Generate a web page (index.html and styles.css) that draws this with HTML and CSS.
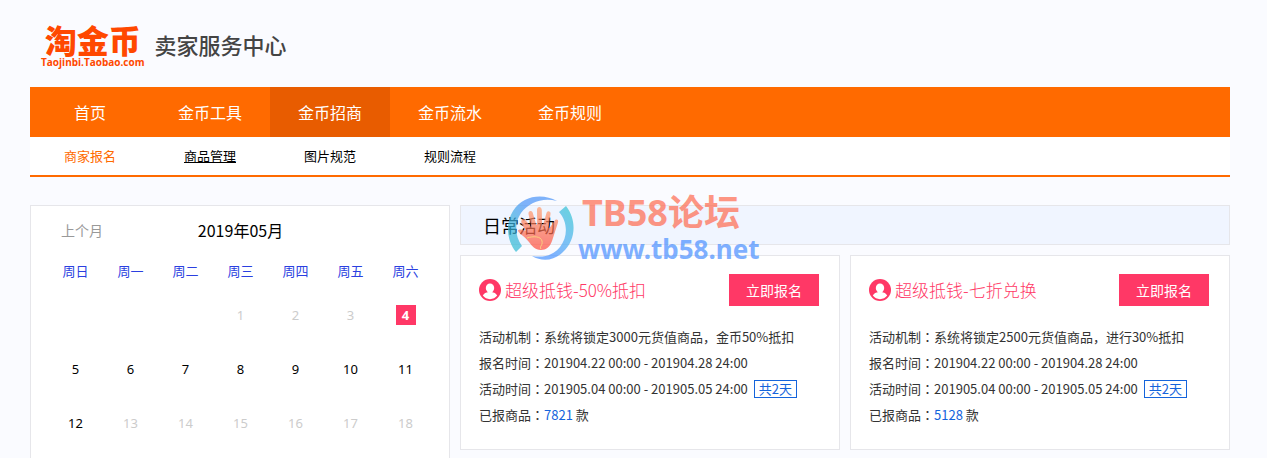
FILE: index.html
```html
<!DOCTYPE html>
<html lang="zh-CN">
<head>
<meta charset="utf-8">
<title>淘金币 卖家服务中心</title>
<link rel="stylesheet" href="styles.css">
</head>
<body>
<div class="page">
  <header class="header">
    <a class="logo" href="#">
      <span class="logo-name">淘金币</span>
      <span class="logo-domain">Taojinbi.Taobao.com</span>
    </a>
    <span class="header-title">卖家服务中心</span>
  </header>

  <nav class="nav">
    <a class="nav-item" href="#">首页</a>
    <a class="nav-item" href="#">金币工具</a>
    <a class="nav-item nav-active" href="#">金币招商</a>
    <a class="nav-item" href="#">金币流水</a>
    <a class="nav-item" href="#">金币规则</a>
  </nav>
  <nav class="subnav">
    <a class="subnav-item subnav-active" href="#">商家报名</a>
    <a class="subnav-item subnav-hover" href="#">商品管理</a>
    <a class="subnav-item" href="#">图片规范</a>
    <a class="subnav-item" href="#">规则流程</a>
  </nav>

  <main class="main">
    <section class="calendar">
      <div class="calendar-head">
        <a class="calendar-prev" href="#">上个月</a>
        <h2 class="calendar-title">2019年05月</h2>
      </div>
      <table class="calendar-table">
        <thead>
          <tr><th>周日</th><th>周一</th><th>周二</th><th>周三</th><th>周四</th><th>周五</th><th>周六</th></tr>
        </thead>
        <tbody>
          <tr><td></td><td></td><td></td><td class="off">1</td><td class="off">2</td><td class="off">3</td><td><span class="today">4</span></td></tr>
          <tr><td>5</td><td>6</td><td>7</td><td>8</td><td>9</td><td>10</td><td>11</td></tr>
          <tr><td>12</td><td class="off">13</td><td class="off">14</td><td class="off">15</td><td class="off">16</td><td class="off">17</td><td class="off">18</td></tr>
        </tbody>
      </table>
    </section>

    <section class="activities">
      <h2 class="activities-title">日常活动</h2>
      <div class="cards">
        <article class="card">
          <div class="card-head">
            <svg class="card-icon" viewBox="0 0 22 22" aria-hidden="true"><circle cx="11" cy="11" r="11" fill="#ff3866"/><ellipse cx="11" cy="9" rx="4.200" ry="4.600" fill="#fff"/><path d="M3.800 16.600c1-2.200 3.200-3.300 5.700-3.600h3c2.500.3 4.700 1.400 5.700 3.600A9.200 9.200 0 0 1 11 20.200a9.200 9.200 0 0 1-7.200-3.600z" fill="#fff"/></svg>
            <h3 class="card-title">超级抵钱-50%抵扣</h3>
            <button class="card-button" type="button">立即报名</button>
          </div>
          <p class="card-line">活动机制<span class="mark" lang="zh-TW">：</span>系统将锁定3000元货值商品，金币50%抵扣</p>
          <p class="card-line">报名时间<span class="mark" lang="zh-TW">：</span>201904.22 00:00 - 201904.28 24:00</p>
          <p class="card-line">活动时间<span class="mark" lang="zh-TW">：</span>201905.04 00:00 - 201905.05 24:00 <span class="days">共2天</span></p>
          <p class="card-line">已报商品<span class="mark" lang="zh-TW">：</span><a class="count" href="#">7821</a> 款</p>
        </article>
        <article class="card">
          <div class="card-head">
            <svg class="card-icon" viewBox="0 0 22 22" aria-hidden="true"><circle cx="11" cy="11" r="11" fill="#ff3866"/><ellipse cx="11" cy="9" rx="4.200" ry="4.600" fill="#fff"/><path d="M3.800 16.600c1-2.200 3.200-3.300 5.700-3.600h3c2.500.3 4.700 1.400 5.700 3.600A9.200 9.200 0 0 1 11 20.200a9.200 9.200 0 0 1-7.200-3.600z" fill="#fff"/></svg>
            <h3 class="card-title">超级抵钱-七折兑换</h3>
            <button class="card-button" type="button">立即报名</button>
          </div>
          <p class="card-line">活动机制<span class="mark" lang="zh-TW">：</span>系统将锁定2500元货值商品，进行30%抵扣</p>
          <p class="card-line">报名时间<span class="mark" lang="zh-TW">：</span>201904.22 00:00 - 201904.28 24:00</p>
          <p class="card-line">活动时间<span class="mark" lang="zh-TW">：</span>201905.04 00:00 - 201905.05 24:00 <span class="days">共2天</span></p>
          <p class="card-line">已报商品<span class="mark" lang="zh-TW">：</span><a class="count" href="#">5128</a> 款</p>
        </article>
      </div>

      <div class="watermark">
        <svg class="watermark-logo" viewBox="0 0 68 68" aria-hidden="true">
          <defs>
            <linearGradient id="ringLeft" x1="0" y1="1" x2="1" y2="0"><stop offset="0" stop-color="#2cc0d0"/><stop offset=".35" stop-color="#3fb0e0"/><stop offset=".6" stop-color="#4a94f8"/></linearGradient>
            <linearGradient id="ringRight" x1="1" y1="0" x2="0" y2="1"><stop offset="0" stop-color="#2cc8cc"/><stop offset=".4" stop-color="#4aaef0"/><stop offset=".7" stop-color="#4a94ff"/></linearGradient>
            <linearGradient id="palm" x1="0" y1="0" x2="0" y2="1"><stop offset="0" stop-color="#ffa070"/><stop offset="1" stop-color="#ff4a3c"/></linearGradient>
          </defs>
          <path d="M50 6C36-2 16 0 6 16c-8 13-6 30 3 41l6-6C8 42 7 28 14 18 22 7 36 2 50 6z" fill="url(#ringLeft)"/>
          <path d="M59 11c11 14 10 34-3 46-9 9-21 10-31 4 12 2 22-1 28-9 8-10 8-25-1-35z" fill="url(#ringRight)"/>
          <path d="M16.500 32c-2-3-3-6-1.500-7.500C17 23 18.500 25 20 27l3 4c.6 1 1.400.6 1.200-.5L21.500 19c-.4-3.500 3.300-4 4.300-1L29 29c.4 1 1.200.8 1.200-.3L30 15c0-4 4.500-4 4.800 0L35 29c.1 1 1.100 1.100 1.300.1L39.500 18c.8-3 4.500-2 4 .9L41.500 32c-.1 1.200.9 1.500 1.400.5L47.500 26c1.500-2.500 4.500-1.500 3.500 1.500L45 46c-2 6-6 9-11 9-6 0-9-4-12-8-4-5-9-8-11-11 0-2 3-2 8 0z" fill="url(#palm)"/>
          <path d="M20 43c6-2 14-2 15 3s-3 5-1 8" fill="none" stroke="#ffc04a"/>
        </svg>
        <div class="watermark-text">
          <span class="watermark-name">TB58论坛</span>
          <span class="watermark-url">www.tb58.net</span>
        </div>
      </div>
    </section>
  </main>
</div>
</body>
</html>
```

FILE: styles.css
```css
* { box-sizing: border-box; }

body {
  margin: 0;
  height: 100vh;
  overflow: hidden;
  background: #fafbff;
  color: #333;
  font-family: "Noto Sans CJK SC", sans-serif;
  font-size: 13px;
}

a { color: inherit; text-decoration: none; }
h2, h3, p { margin: 0; font-weight: 400; }

.page { padding: 0 37px 0 30px; }

.header {
  display: flex;
  align-items: center;
  gap: 10px;
  height: 87px;
  padding: 4px 11px 0;
}
.logo { display: flex; flex-direction: column; align-items: center; color: #ff4800; }
.logo-name { font-size: 32px; font-weight: 900; line-height: 32px; }
.logo-domain { font-family: "Open Sans", sans-serif; font-size: 10px; font-weight: 700; line-height: 14px; }
.header-title { font-size: 22px; font-weight: 500; line-height: 32px; padding-bottom: 4px; color: #444; }

.nav { display: flex; background: #ff6a00; color: #fff; }
.nav-item { width: 120px; font-size: 16px; line-height: 50px; text-align: center; }
.nav-active { background: #e85c00; }

.subnav { display: flex; background: #fff; border-bottom: 2px solid #ff6a00; color: #000; }
.subnav-item { width: 120px; line-height: 38px; text-align: center; }
.subnav-active { color: #ff6a00; }
.subnav-hover { text-decoration: underline; }

.main { display: flex; align-items: flex-start; gap: 10px; padding-top: 28px; }

.calendar {
  flex: 0 0 420px;
  padding: 12px 16px 20px 17px;
  background: #fff;
  border: 1px solid #e6e6ea;
}
.calendar-head {
  display: grid;
  grid-template-columns: 1fr auto 1fr;
  align-items: center;
  padding: 0 13px;
  line-height: 24px;
}
.calendar-prev { font-size: 14px; color: #999; }
.calendar-title { font-size: 16px; color: #000; }
.calendar-table { width: 100%; margin-top: 10px; border-collapse: collapse; table-layout: fixed; color: #000; }
.calendar-table th { height: 36px; padding: 0; font-weight: 400; color: #2b3fe0; }
.calendar-table td { height: 54px; padding: 0; font-family: "Noto Sans", sans-serif; text-align: center; }
.calendar-table .off { color: #ccc; }
.today { display: inline-block; width: 20px; line-height: 20px; background: #ff3866; color: #fff; font-weight: 700; }

.activities { position: relative; flex: 1; }
.activities-title {
  padding-left: 22px;
  border: 1px solid #e6e6ea;
  background: #f0f5ff;
  color: #000;
  font-size: 18px;
  line-height: 38px;
}
.cards { display: grid; grid-template-columns: 1fr 1fr; gap: 10px; margin-top: 10px; }
.card { padding: 18px 20px 21px 18px; border: 1px solid #e6e6ea; background: #fff; }
.card-head { display: flex; align-items: center; gap: 4px; margin-bottom: 18px; }
.card-icon { width: 22px; height: 22px; }
.card-title { flex: 1; font-size: 17px; font-weight: 300; line-height: 32px; color: #ff3866; }
.card-button {
  width: 90px;
  height: 32px;
  padding: 0;
  border: 0;
  background: #ff3866;
  color: #fff;
  font-family: inherit;
  font-size: 14px;
}
.card-line { line-height: 26px; }
.mark { font-family: "Noto Sans CJK TC", sans-serif; }
.count { color: #1464dc; }
.days { display: inline-block; margin-left: 3px; padding: 0 4px; border: 1px solid #1464dc; line-height: 16px; color: #1464dc; }

.watermark { position: absolute; top: -10px; left: 47px; display: flex; gap: 3px; opacity: .7; pointer-events: none; }
.watermark-logo { width: 68px; height: 68px; }
.watermark-text { display: flex; flex-direction: column; font-family: "Noto Sans", "Noto Sans CJK SC", sans-serif; font-weight: 700; }
.watermark-name { padding-left: 4px; font-size: 36px; line-height: 36px; color: #ff6a50; }
.watermark-url { font-size: 26px; line-height: 36px; color: #4a90ff; }
```
